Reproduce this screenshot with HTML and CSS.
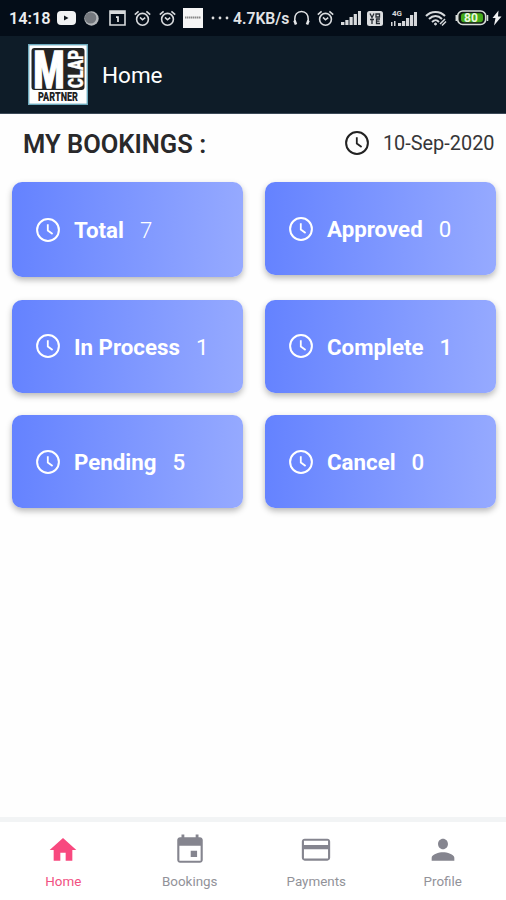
FILE: index.html
```html
<!DOCTYPE html>
<html lang="en">
<head>
<meta charset="utf-8">
<title>Home</title>
<link rel="stylesheet" href="styles.css">
</head>
<body>
<svg width="0" height="0" class="defs">
  <symbol id="clock" viewBox="0 0 24 24"><circle cx="12" cy="12" r="10.900" fill="none" stroke="currentColor" stroke-width="2"/><path d="M11.800 6.200v6.300l4.800 3.500" fill="none" stroke="currentColor" stroke-width="1.800"/></symbol>
  <symbol id="alarm" viewBox="0 0 17 17"><circle cx="8.500" cy="9.300" r="5.900" fill="none" stroke="currentColor" stroke-width="1.600"/><path d="M.8 4.600 4.600 1.400M16.200 4.600 12.400 1.400M6 7.400l2.500 2.400 2.700-2.100" fill="none" stroke="currentColor" stroke-width="1.600"/></symbol>
</svg>
<div class="screen">
  <div class="status">
    <span class="time">14:18</span>
    <svg class="youtube" width="19" height="14"><rect width="19" height="14" rx="4" fill="#f1f2f3"/><path d="M7 4.500v5l4.500-2.500z" fill="#10161c"/></svg>
    <svg class="dot" width="15" height="15"><circle cx="7.500" cy="7.500" r="7.200" fill="#b4b7ba"/><circle cx="6.600" cy="6.900" r="5.700" fill="#74787e"/></svg>
    <svg class="date-icon" width="17" height="16"><path d="M1 1h15v14H1z" fill="none" stroke="#d8dadc" stroke-width="1.600"/><path d="M1 1h15v3H1z" fill="#d8dadc"/><path d="M7 7.200h2V12" fill="none" stroke="#e4e5e6" stroke-width="1.700"/></svg>
    <svg class="alarm-1" width="17" height="17"><use href="#alarm"/></svg>
    <svg class="alarm-2" width="17" height="17"><use href="#alarm"/></svg>
    <svg class="app" width="20" height="20"><rect width="20" height="20" fill="#f5f5f5"/><path d="M2 9.500h16" stroke="#888" stroke-width="2" stroke-dasharray="1.500 .5"/></svg>
    <svg class="more" width="18" height="4"><circle cx="2" cy="2" r="1.400" fill="#ddd"/><circle cx="9" cy="2" r="1.400" fill="#ddd"/><circle cx="16" cy="2" r="1.400" fill="#ddd"/></svg>
    <span class="speed">4.7KB/s</span>
    <svg class="headset" width="17" height="16"><path d="M1.800 13V9C1.800 5 4 1.500 8.500 1.500S15.200 5 15.200 9v4" fill="none" stroke="#e5e6e8" stroke-width="1.500"/><path d="M1.500 10.500 3 14.500M15.500 10.500 14 14.500" stroke="#e5e6e8" stroke-width="2.600"/></svg>
    <svg class="alarm-3" width="17" height="17"><use href="#alarm"/></svg>
    <svg class="signal" width="20" height="14" fill="#d9dbdd"><path d="M0 11h3.400v3H0zM4.300 9h3.200v5H4.300zM8.500 6h3.200v8H8.500zM12.700 3h3.200v11h-3.200zM17 0h3v14h-3z"/></svg>
    <svg class="volte" width="16" height="15"><rect width="16" height="15" rx="2.500" fill="#dcdee0"/><path d="M3 2.500 5 6.500l2-4M9 3h3.500v3H9zM3 8.500h4M5 8.500V13M13 8H9.500v4.500H13M9.500 10.200h3" fill="none" stroke="#252b32" stroke-width="1.300"/></svg>
    <svg class="lte" width="26" height="17" fill="#d5d7da"><text x="1" y="6" class="lte-text">4G</text><path d="M0 12h1.500v4H0zM3 11h1.500v5H3zM7 13h3.200v3H7zM11 11h3.200v5H11zM15 8h3.200v8H15zM19 5h3.200v11H19zM23 2h3v14h-3z"/></svg>
    <svg class="wifi" width="22" height="17" fill="none" stroke="#d7dadd"><path d="M1 6C6 .5 15 .5 20 6" stroke-width="2"/><path d="M4 9c4-4 9-4 13 0M7 12c3-2.600 4.500-2.600 7 0" stroke-width="2"/><circle cx="10.500" cy="14" r="1" fill="#d7dadd"/><path d="m15 14 5-5M17 15.500l4-4" stroke-width="1.500"/></svg>
    <svg class="battery" width="34" height="16"><rect x="2.700" y="1" width="28" height="13.500" rx="5" fill="#101914" stroke="#d9dddb" stroke-width="1.600"/><rect x="6" y="3.300" width="22" height="9" rx="3" fill="#43aa19"/><path d="M1.300 5v6M32.500 5v6" stroke="#d9dddb" stroke-width="1.500"/><text x="9" y="12" class="battery-text" textLength="14">80</text></svg>
    <svg class="bolt" width="10" height="16"><path d="M6.500.5.500 8h3L2 15.500 9.500 6.500H6z" fill="#f0f1f2"/></svg>
  </div>
  <header class="appbar">
    <svg class="logo" width="60" height="61">
      <rect x=".7" y=".7" width="58.600" height="59.600" fill="#fff" stroke="#6daabd" stroke-width="1.400"/>
      <rect x="3.500" y="4" width="53" height="42" rx="3" fill="#242424"/>
      <text class="logo-m" x="5.500" y="44" textLength="31" lengthAdjust="spacingAndGlyphs">M</text>
      <text class="logo-clap" transform="translate(54.500 44) rotate(-90)" textLength="38" lengthAdjust="spacingAndGlyphs">CLAP</text>
      <text class="logo-partner" x="10" y="56.500" textLength="40" lengthAdjust="spacingAndGlyphs">PARTNER</text>
    </svg>
    <h1>Home</h1>
  </header>
  <main>
    <div class="heading">
      <h2>MY BOOKINGS :</h2>
      <div class="today"><svg width="24" height="24"><use href="#clock"/></svg><span>10-Sep-2020</span></div>
    </div>
    <div class="cards">
      <div class="card"><svg width="24" height="24"><use href="#clock"/></svg><b>Total</b><span class="light">7</span></div>
      <div class="card"><svg width="24" height="24"><use href="#clock"/></svg><b>Approved</b><span>0</span></div>
      <div class="card"><svg width="24" height="24"><use href="#clock"/></svg><b>In Process</b><span>1</span></div>
      <div class="card"><svg width="24" height="24"><use href="#clock"/></svg><b>Complete</b><span class="medium">1</span></div>
      <div class="card"><svg width="24" height="24"><use href="#clock"/></svg><b>Pending</b><span class="medium">5</span></div>
      <div class="card"><svg width="24" height="24"><use href="#clock"/></svg><b>Cancel</b><span class="medium">0</span></div>
    </div>
  </main>
  <nav>
    <div class="tab active"><svg width="32" height="32" viewBox="0 0 24 24"><path d="M10 20v-6h4v6h5v-8h3L12 3 2 12h3v8z"/></svg><span>Home</span></div>
    <div class="tab"><svg width="34" height="34" viewBox="0 0 24 24"><path d="M17 12.500h-4.500V17H17v-4.500zM16 1v2H8V1H6v2H5c-1.110 0-2 .9-2 2v14c0 1.100.89 2 2 2h14c1.100 0 2-.9 2-2V5c0-1.100-.9-2-2-2h-1V1h-2zm3.500 18.500h-15V9h15v10.500z"/></svg><span>Bookings</span></div>
    <div class="tab"><svg width="34" height="34" viewBox="0 0 24 24"><path d="M20 4H4c-1.110 0-2 .89-2 2v11.500c0 1.110.89 2 2 2h16c1.110 0 2-.89 2-2V6c0-1.110-.89-2-2-2zm.5 14h-17V11.500h17V18zm0-9.500h-17v-3h17v3z"/></svg><span>Payments</span></div>
    <div class="tab"><svg width="34" height="34" viewBox="0 0 24 24"><path d="M12 11.500c2 0 3.500-1.600 3.500-3.700S14 4 12 4 8.500 5.700 8.500 7.800 10 11.500 12 11.500zm0 2c-2.670 0-8 1.340-8 4V19.500h16v-2c0-2.660-5.330-4-8-4z"/></svg><span>Profile</span></div>
  </nav>
</div>
</body>
</html>
```
FILE: styles.css
```css
* { box-sizing: border-box; }
body { margin: 0; font-family: Roboto, sans-serif; background: #fefefe; }
svg { display: block; flex: none; }
.defs { position: absolute; }
.screen { width: 506px; height: 900px; display: flex; flex-direction: column; overflow: hidden; }

.status { height: 36px; background: #040d18; color: #d9dbde; display: flex; align-items: center; padding-left: 9px; flex: none; }
.time { width: 48px; font-size: 16.300px; font-weight: 600; color: #eceeef; padding-top: 1px; }
.speed { width: 60px; margin-left: 4px; font-size: 15.700px; font-weight: 600; color: #e2e4e6; white-space: nowrap; padding-top: 1px; }
.dot { margin-left: 8px; }
.date-icon { margin-left: 10px; }
.alarm-1 { margin-left: 8px; }
.alarm-2 { margin-left: 8px; }
.app { margin-left: 7px; margin-top: -1px; }
.more { margin-left: 8px; }
.headset { margin-left: 0; }
.alarm-3 { margin-left: 7px; }
.signal { margin-left: 7px; }
.volte { margin-left: 6px; }
.lte { margin-left: 8px; }
.lte-text { font-size: 8px; font-weight: 700; }
.wifi { margin-left: 8px; }
.battery { margin-left: 8px; }
.battery-text { font-size: 12px; font-weight: 700; fill: #e9f7de; }
.bolt { margin-left: 3px; }

.appbar { height: 78px; flex: none; background: #0e1c28; border-bottom: 1px solid #3b4957; display: flex; align-items: center; padding: 0 0 0 28px; gap: 14px; }
.appbar h1 { margin: 1px 0 0; font-size: 22.500px; line-height: 28px; font-weight: 400; color: #fff; }
.logo text { font-family: Roboto, sans-serif; font-weight: 900; }
.logo { overflow: visible; }
.logo-m { font-size: 52px; fill: #fff; stroke: #fff; stroke-width: 1.500px; }
.logo-clap { font-size: 21px; fill: #fff; stroke: #fff; stroke-width: .4px; }
.logo-partner { font-size: 12px; fill: #222; }

main { flex: 1; padding: 14px 10.500px 0 11.500px; }
.heading { height: 32px; display: flex; align-items: center; justify-content: space-between; padding-left: 11.500px; color: #29292b; }
.heading h2 { margin: 0; font-size: 25.500px; font-weight: 600; white-space: nowrap; }
.today { display: flex; align-items: center; gap: 14px; font-size: 19.900px; color: #363638; margin: -2px 1px 0 0; }
.today svg { color: #222; margin-top: -1px; }

.cards { margin-top: 22px; display: grid; grid-template-columns: 231px 231px; column-gap: 22px; row-gap: 22.500px; }
.card { height: 93px; border-radius: 10px; background: linear-gradient(93deg, #6482ff, #96aaff); box-shadow: 0 3px 6px rgba(0, 0, 0, .28); display: flex; align-items: center; padding-left: 24.500px; color: #fff; font-size: 22.300px; }
.card:first-child { height: 95px; }
.card b { font-weight: 700; margin-left: 14px; padding-top: 1.500px; }
.card span { margin-left: 16px; padding-top: 1.500px; }
.card .light { font-weight: 300; }
.card .medium { font-weight: 500; }

nav { height: 83px; flex: none; border-top: 5px solid #f2f4f5; display: grid; grid-template-columns: repeat(4, 1fr); background: #fff; }
.tab { display: flex; flex-direction: column; align-items: center; font-size: 13.400px; color: #929299; }
.tab svg { height: 34px; margin-top: 11px; fill: #85858f; }
.tab span { margin-top: 7px; line-height: 16px; }
.tab.active { color: #f15182; }
.tab.active svg { fill: #f8497f; }
```
